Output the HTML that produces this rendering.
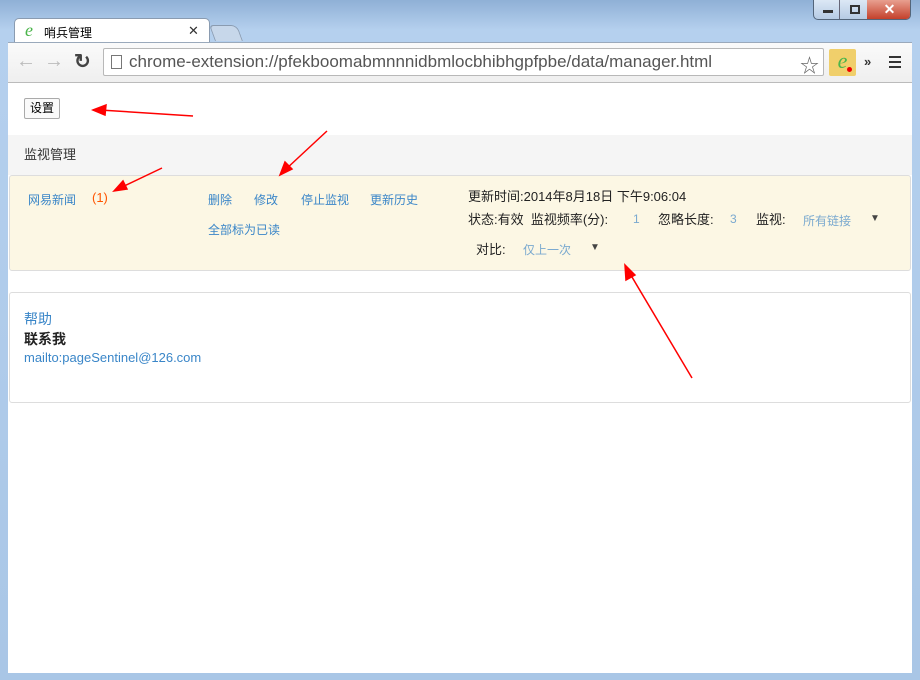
<!DOCTYPE html>
<html><head><meta charset="utf-8"><style>
*{margin:0;padding:0;box-sizing:border-box}
body{width:920px;height:680px;overflow:hidden;position:relative;font-family:"Liberation Sans","Noto Sans CJK SC",sans-serif;background:linear-gradient(180deg,#8fb0d6 0,#b5d0ee 30px,#a9c6e6 100%)}
.abs{position:absolute}
.tab{left:14px;top:18px;width:196px;height:26px;background:#fff;border:1px solid #8a9bb0;border-bottom:none;border-radius:5px 5px 0 0;font-size:12px}
.toolbar{left:8px;top:42px;width:904px;height:40px;background:linear-gradient(#fafafa,#efefef);border-top:1px solid #9aa9bb}
.url{left:103px;top:48px;width:721px;height:28px;background:#fff;border:1px solid #b8b8b8;border-radius:2px;font-size:17px;color:#555;line-height:26px;padding-left:25px}
.content{left:8px;top:82px;width:904px;height:591px;background:#fff;border-top:1px solid #bbb}
a,.lk{color:#3a86c8}
</style></head><body>
<div class="abs" style="left:813px;top:0;width:98px;height:20px;border:1px solid #53657a;border-top:none;border-radius:0 0 5px 5px;background:linear-gradient(#dce8f5,#b6cbe4);overflow:hidden">
<div class="abs" style="left:0;top:0;width:26px;height:19px;border-right:1px solid #667"></div>
<div class="abs" style="left:9px;top:10px;width:10px;height:3px;background:#333"></div>
<div class="abs" style="left:36px;top:5px;width:10px;height:9px;border:2px solid #333"></div>
<div class="abs" style="left:53px;top:0;width:45px;height:19px;background:linear-gradient(#e8a090,#c4412b);color:#fff;text-align:center;font-weight:bold;font-size:14px;line-height:18px">✕</div>
</div>
<div class="abs tab"><span class="abs" style="left:10px;top:1px;color:#4bb54b;font-style:italic;font-family:'Liberation Serif',serif;font-size:18px">e</span><span class="abs" style="left:29px;top:5px">哨兵管理</span><span class="abs" style="left:173px;top:4px;font-size:13px;color:#333">✕</span></div>
<div class="abs" style="left:212px;top:25px;width:28px;height:16px;background:#c7d7ea;border:1px solid #8a9bb0;border-bottom:none;border-radius:4px 6px 0 0;transform:skewX(20deg)"></div>
<div class="abs toolbar"></div>
<div class="abs" style="left:16px;top:50px;font-size:20px;color:#bbb">←</div>
<div class="abs" style="left:44px;top:50px;font-size:20px;color:#bbb">→</div>
<div class="abs" style="left:74px;top:49px;font-size:20px;color:#444;font-weight:bold">↻</div>
<div class="abs url">chrome-extension://pfekboomabmnnnidbmlocbhibhgpfpbe/data/manager.html</div>
<div class="abs" style="left:111px;top:55px;width:11px;height:14px;border:1px solid #777"></div>
<div class="abs" style="left:800px;top:51px;font-size:19px;color:#666">☆</div>
<div class="abs" style="left:829px;top:49px;width:27px;height:27px;background:#f0cf6b;border-radius:2px;color:#4bb54b;font-style:italic;font-family:'Liberation Serif',serif;font-size:22px;text-align:center;line-height:24px">e<span class="abs" style="left:18px;top:18px;width:5px;height:5px;background:#e00;border-radius:50%"></span></div>
<div class="abs" style="left:864px;top:54px;font-size:13px;font-weight:bold;color:#333">»</div>
<div class="abs" style="left:889px;top:56px;width:12px;height:12px;border-top:2px solid #333;border-bottom:2px solid #333"><div style="margin-top:3px;height:2px;background:#333"></div></div>
<div class="abs content">
<div class="abs" style="left:16px;top:15px;width:36px;height:21px;border:1px solid #aaa;border-radius:2px;background:#fafafa;font-size:12px;text-align:center;line-height:19px">设置</div>
<div class="abs" style="left:0;top:52px;width:904px;height:40px;background:#f5f5f5;font-size:13px;line-height:40px;padding-left:16px;color:#333">监视管理</div>
<div class="abs" style="left:1px;top:92px;width:902px;height:96px;background:#fcf7e4;border:1px solid #ddd;border-radius:3px;font-size:12px">
<span class="abs lk" style="left:18px;top:15px">网易新闻</span>
<span class="abs" style="left:82px;top:14px;color:#f50;font-size:13px">(1)</span>
<span class="abs lk" style="left:198px;top:15px">删除</span>
<span class="abs lk" style="left:244px;top:15px">修改</span>
<span class="abs lk" style="left:291px;top:15px">停止监视</span>
<span class="abs lk" style="left:360px;top:15px">更新历史</span>
<span class="abs lk" style="left:198px;top:45px">全部标为已读</span>
<span class="abs" style="left:458px;top:10px;font-size:13px;color:#222">更新时间:2014年8月18日 下午9:06:04</span>
<span class="abs" style="left:458px;top:33px;font-size:13px;color:#222">状态:有效&nbsp; 监视频率(分):</span>
<span class="abs" style="left:623px;top:36px;color:#7aa9cf">1</span>
<span class="abs" style="left:648px;top:33px;font-size:13px;color:#222">忽略长度:</span>
<span class="abs" style="left:720px;top:36px;color:#7aa9cf">3</span>
<span class="abs" style="left:746px;top:33px;font-size:13px;color:#222">监视:</span>
<span class="abs" style="left:793px;top:36px;color:#7aa9cf">所有链接</span>
<span class="abs" style="left:860px;top:37px;font-size:10px;color:#444">▼</span>
<span class="abs" style="left:466px;top:63px;font-size:13px;color:#222">对比:</span>
<span class="abs" style="left:513px;top:65px;color:#7aa9cf">仅上一次</span>
<span class="abs" style="left:580px;top:66px;font-size:10px;color:#444">▼</span>
</div>
<div class="abs" style="left:1px;top:209px;width:902px;height:111px;border:1px solid #ddd;border-radius:3px">
<span class="abs" style="left:14px;top:16px;font-size:14px;color:#3a86c8">帮助</span>
<span class="abs" style="left:14px;top:36px;font-size:14px;font-weight:bold;color:#222">联系我</span>
<span class="abs" style="left:14px;top:57px;font-size:13px;color:#3a86c8">mailto:pageSentinel@126.com</span>
</div>
</div>
<svg class="abs" style="left:0;top:0" width="920" height="680">
<g stroke="#f00" stroke-width="1.5" fill="#f00">
<line x1="193" y1="116" x2="100" y2="110"/><polygon points="93,110 106,105 105,115"/>
<line x1="327" y1="131" x2="285" y2="170"/><polygon points="280,175 285,162 292,169"/>
<line x1="162" y1="168" x2="120" y2="188"/><polygon points="114,191 123,181 127,189"/>
<line x1="692" y1="378" x2="629" y2="272"/><polygon points="625,265 635,275 626,280"/>
</g></svg>
</body></html>
